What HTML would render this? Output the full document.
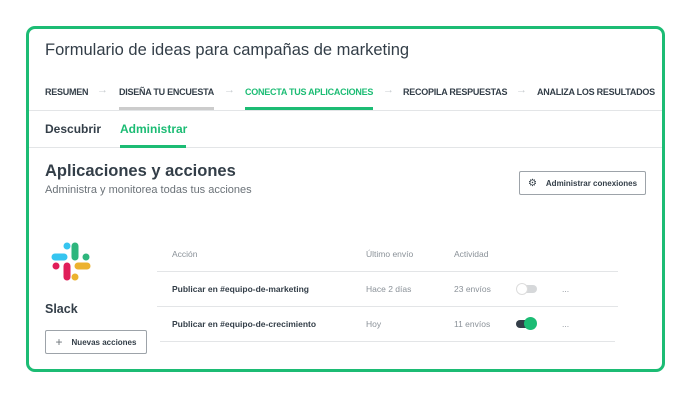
<!DOCTYPE html>
<html><head><meta charset="utf-8"><style>
*{margin:0;padding:0;box-sizing:border-box}
body{width:691px;height:400px;background:#fff;font-family:"Liberation Sans",sans-serif;position:relative;overflow:hidden;color:#333e48}
.card{position:absolute;left:26px;top:26px;width:639px;height:346px;border:3px solid #1cbc74;border-radius:9px;background:#fff}
.a{position:absolute;white-space:nowrap}
.nav{font-size:9px;font-weight:bold;top:87px;color:#333e48;letter-spacing:-0.25px}
.arr{font-size:11px;color:#c8ccd0;top:84px}
.hl{position:absolute;height:1px;background:#e3e5e7}
.th{font-size:8.5px;color:#8a9198;top:249px}
.td{font-size:8.5px;color:#8a9198}
.tb{font-size:8.5px;font-weight:bold;color:#333e48}
.btn{position:absolute;border:1px solid #9da3a9;border-radius:2px;font-size:8px;font-weight:bold;color:#333e48;display:flex;align-items:center;justify-content:center;gap:9px}
</style></head><body>
<div class="card"></div>
<div class="a" style="left:45px;top:41px;font-size:16.5px;color:#333e48">Formulario de ideas para campañas de marketing</div>
<div class="a nav" style="left:45px">RESUMEN</div>
<div class="a arr" style="left:97px">→</div>
<div class="a nav" style="left:119px">DISEÑA TU ENCUESTA</div>
<div class="a arr" style="left:224px">→</div>
<div class="a nav" style="left:245px;color:#1cbc74">CONECTA TUS APLICACIONES</div>
<div class="a arr" style="left:383px">→</div>
<div class="a nav" style="left:403px">RECOPILA RESPUESTAS</div>
<div class="a arr" style="left:516px">→</div>
<div class="a nav" style="left:537px">ANALIZA LOS RESULTADOS</div>
<div class="hl" style="left:29px;width:633px;top:110px"></div>
<div class="a" style="left:119px;top:107px;width:95px;height:3px;background:#ccc"></div>
<div class="a" style="left:245px;top:107px;width:128px;height:3px;background:#1cbc74"></div>
<div class="a" style="left:45px;top:122px;font-size:12px;font-weight:bold;color:#333e48">Descubrir</div>
<div class="a" style="left:120px;top:122px;font-size:12px;font-weight:bold;color:#1cbc74">Administrar</div>
<div class="hl" style="left:29px;width:633px;top:147px"></div>
<div class="a" style="left:120px;top:145px;width:66px;height:3px;background:#1cbc74"></div>
<div class="a" style="left:45px;top:162px;font-size:16.5px;font-weight:bold;color:#333e48">Aplicaciones y acciones</div>
<div class="a" style="left:45px;top:184px;font-size:11px;color:#6b7278">Administra y monitorea todas tus acciones</div>
<div class="btn" style="left:519px;top:171px;width:127px;height:24px"><span style="font-size:10px;font-weight:normal">⚙</span>Administrar conexiones</div>
<svg class="a" style="left:51px;top:242px" width="40" height="40" viewBox="0 0 40 40">
<g stroke-linecap="round" stroke-width="7">
<line x1="16" y1="4" x2="16" y2="4" stroke="#36c5f0"/><line x1="4" y1="15" x2="13" y2="15" stroke="#36c5f0"/>
<line x1="24" y1="4" x2="24" y2="15" stroke="#2eb67d"/><line x1="35" y1="15" x2="35" y2="15" stroke="#2eb67d"/>
<line x1="5" y1="24" x2="5" y2="24" stroke="#e01e5a"/><line x1="16" y1="24" x2="16" y2="35" stroke="#e01e5a"/>
<line x1="27" y1="24" x2="36" y2="24" stroke="#ecb22e"/><line x1="24" y1="35" x2="24" y2="35" stroke="#ecb22e"/>
</g></svg>
<div class="a" style="left:45px;top:302px;font-size:12.5px;font-weight:bold;color:#333e48">Slack</div>
<div class="btn" style="left:45px;top:330px;width:102px;height:24px"><span style="font-size:12px;font-weight:normal;color:#6b7278">+</span>Nuevas acciones</div>
<div class="a th" style="left:172px">Acción</div>
<div class="a th" style="left:366px">Último envío</div>
<div class="a th" style="left:454px">Actividad</div>
<div class="hl" style="left:157px;width:461px;top:271px"></div>
<div class="hl" style="left:157px;width:461px;top:306px"></div>
<div class="hl" style="left:160px;width:455px;top:341px"></div>
<div class="a tb" style="left:172px;top:284px">Publicar en #equipo-de-marketing</div>
<div class="a td" style="left:366px;top:284px">Hace 2 días</div>
<div class="a td" style="left:454px;top:284px">23 envíos</div>
<div class="a" style="left:518px;top:285px;width:19px;height:8px;border-radius:4px;background:#d6d8da"></div>
<div class="a" style="left:516px;top:283px;width:12px;height:12px;border-radius:50%;background:#fff;border:1px solid #ddd"></div>
<div class="a td" style="left:562px;top:284px">...</div>
<div class="a tb" style="left:172px;top:319px">Publicar en #equipo-de-crecimiento</div>
<div class="a td" style="left:366px;top:319px">Hoy</div>
<div class="a td" style="left:454px;top:319px">11 envíos</div>
<div class="a" style="left:516px;top:320px;width:19px;height:8px;border-radius:4px;background:#333e48"></div>
<div class="a" style="left:524px;top:317px;width:13px;height:13px;border-radius:50%;background:#1cbc74"></div>
<div class="a td" style="left:562px;top:319px">...</div>
</body></html>
